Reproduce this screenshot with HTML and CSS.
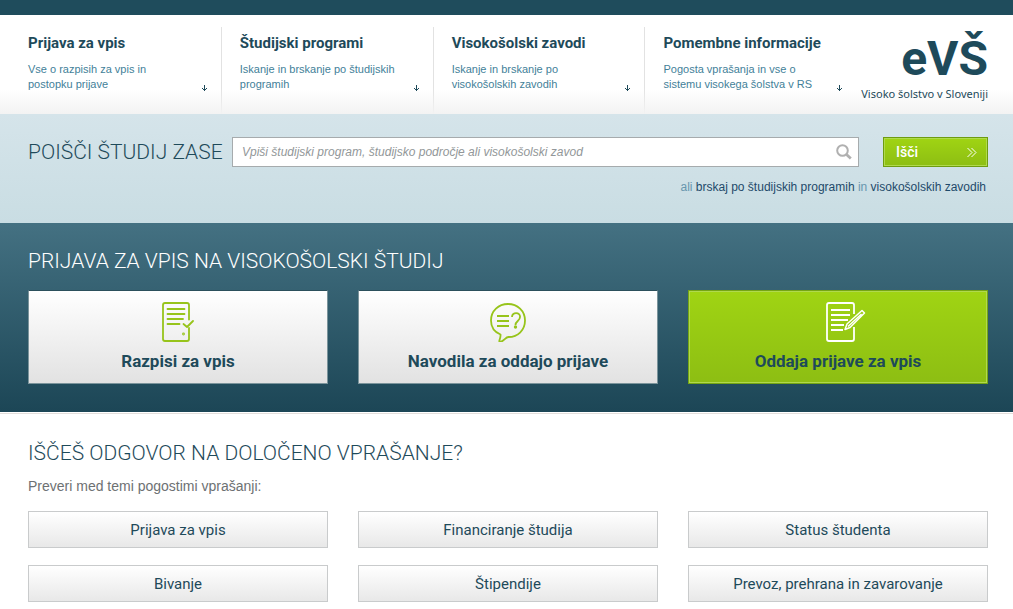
FILE: index.html
```html
<!DOCTYPE html>
<html lang="sl">
<head>
<meta charset="utf-8">
<meta name="viewport" content="width=device-width, initial-scale=1">
<title>eVŠ – Visoko šolstvo v Sloveniji</title>
<link rel="stylesheet" href="styles.css">
</head>
<body>
<div class="topbar"></div>
<header class="header wrap">
  <nav class="nav">
    <a class="nav-item" href="#">
      <span class="nav-title">Prijava za vpis</span>
      <span class="nav-text">Vse o razpisih za vpis in postopku prijave</span>
      <svg class="nav-arrow" width="5" height="7" viewBox="0 0 5 7" aria-hidden="true"><path d="M2 0h1v4h1v-1h1v1h-1v1h-1v1h-1v-1h-1v-1h-1v-1h1v1h1z"/></svg>
    </a>
    <a class="nav-item" href="#">
      <span class="nav-title">Študijski programi</span>
      <span class="nav-text">Iskanje in brskanje po študijskih programih</span>
      <svg class="nav-arrow" width="5" height="7" viewBox="0 0 5 7" aria-hidden="true"><path d="M2 0h1v4h1v-1h1v1h-1v1h-1v1h-1v-1h-1v-1h-1v-1h1v1h1z"/></svg>
    </a>
    <a class="nav-item" href="#">
      <span class="nav-title">Visokošolski zavodi</span>
      <span class="nav-text">Iskanje in brskanje po visokošolskih zavodih</span>
      <svg class="nav-arrow" width="5" height="7" viewBox="0 0 5 7" aria-hidden="true"><path d="M2 0h1v4h1v-1h1v1h-1v1h-1v1h-1v-1h-1v-1h-1v-1h1v1h1z"/></svg>
    </a>
    <a class="nav-item" href="#">
      <span class="nav-title">Pomembne informacije</span>
      <span class="nav-text">Pogosta vprašanja in vse o sistemu visokega šolstva v RS</span>
      <svg class="nav-arrow" width="5" height="7" viewBox="0 0 5 7" aria-hidden="true"><path d="M2 0h1v4h1v-1h1v1h-1v1h-1v1h-1v-1h-1v-1h-1v-1h1v1h1z"/></svg>
    </a>
  </nav>
  <a class="logo" href="#">
    <span class="logo-mark">eVŠ</span>
    <span class="logo-text">Visoko šolstvo v Sloveniji</span>
  </a>
</header>

<section class="search wrap">
  <form class="search-form">
    <label class="heading search-label" for="q">POIŠČI ŠTUDIJ ZASE</label>
    <div class="search-box">
      <input class="search-input" id="q" type="text" placeholder="Vpiši študijski program, študijsko področje ali visokošolski zavod">
      <svg width="16" height="16" viewBox="0 0 16 16" fill="none" stroke="#b0b0b0" aria-hidden="true"><circle cx="6.5" cy="6.5" r="5.3" stroke-width="2"/><path d="M10.5 10.5l4.3 4" stroke-width="2.8"/></svg>
    </div>
    <button class="search-button" type="submit">
      <span>Išči</span>
      <svg width="10" height="11" viewBox="0 0 10 11" fill="none" stroke="#fff" aria-hidden="true"><path d="M.5 1l4.500 4.500L.5 10M4.500 1L9 5.500 4.500 10"/></svg>
    </button>
  </form>
  <p class="search-links">ali <a href="#">brskaj po študijskih programih</a> in <a href="#">visokošolskih zavodih</a></p>
</section>

<section class="apply wrap">
  <h2 class="heading apply-title">PRIJAVA ZA VPIS NA VISOKOŠOLSKI ŠTUDIJ</h2>
  <div class="grid">
    <a class="card" href="#">
      <svg width="32" height="40" viewBox="0 0 32 40" fill="none" stroke="#97c41b" stroke-width="1.800" stroke-linecap="round" stroke-linejoin="round" aria-hidden="true"><path d="M27 17.500V3q0-2-2-2H3Q1 1 1 3v34q0 2 2 2h22q2 0 2-2V26"/><path d="M5.500 7h17M5.500 12h17M5.500 17h15.500M5.500 22h12M21.500 22l3.500 3 6-6"/><circle cx="21.500" cy="32" r=".5"/></svg>
      <span>Razpisi za vpis</span>
    </a>
    <a class="card" href="#">
      <svg width="36" height="40" viewBox="0 0 36 40" fill="none" stroke="#97c41b" stroke-width="1.800" stroke-linejoin="round" aria-hidden="true"><path d="M10.500 32.500C4.500 30 1 25 1 18.500 1 9 8.500 2 18 2s17 7 17 16.500S28 35 18.500 35c-3 0-4.500 4.500-8.500 5-2 0 1-4 .5-7.500z"/><path d="M7 14h12M7 19h12M7 24h12M22 15c0-5.500 8.500-5 8 0 0 4-4.500 4-4.500 8"/><circle cx="25.500" cy="25" r=".8"/></svg>
      <span>Navodila za oddajo prijave</span>
    </a>
    <a class="card card-green" href="#">
      <svg class="icon-pen" width="40" height="40" viewBox="0 0 40 40" fill="none" stroke="#fff" stroke-width="1.800" stroke-linejoin="round" aria-hidden="true"><path d="M28 12V3q0-2-2-2H3Q1 1 1 3v34q0 2 2 2h23q2 0 2-2V25"/><path d="M5 8h19M5 13h19M5 18h17M5 23h13M5 28h12"/><path d="M19 27.500l2-5.500L36 8.500l2.500 2.500L24 25.500z M22 24.500L35.500 12" stroke-width="1.500"/></svg>
      <span>Oddaja prijave za vpis</span>
    </a>
  </div>
</section>

<main class="faq wrap">
  <h2 class="heading">IŠČEŠ ODGOVOR NA DOLOČENO VPRAŠANJE?</h2>
  <p class="faq-lead">Preveri med temi pogostimi vprašanji:</p>
  <div class="grid faq-grid">
    <a class="topic" href="#">Prijava za vpis</a>
    <a class="topic" href="#">Financiranje študija</a>
    <a class="topic" href="#">Status študenta</a>
    <a class="topic" href="#">Bivanje</a>
    <a class="topic" href="#">Štipendije</a>
    <a class="topic" href="#">Prevoz, prehrana in zavarovanje</a>
  </div>
</main>
</body>
</html>
```

FILE: styles.css
```css
* { box-sizing: border-box; }

body {
  margin: 0;
  background: #fff;
  color: #1e4a5a;
  font-family: "Liberation Sans", Arial, sans-serif;
}

a { color: inherit; text-decoration: none; }
h2, p { margin: 0; }

.wrap { padding-left: 28px; padding-right: 25px; }

.heading {
  font-family: Roboto, sans-serif;
  font-size: 21px;
  font-weight: 300;
  line-height: 30px;
}

.topbar { height: 15px; background: #1f4c5c; }

/* Header */
.header {
  display: flex;
  gap: 4px;
  padding-top: 12px;
  background: linear-gradient(#fff 75%, #f3f3f3);
}

.nav {
  flex: 1;
  display: grid;
  grid-template-columns: repeat(4, 1fr);
  gap: 18px;
}

.nav-item {
  display: grid;
  grid-template-columns: 1fr auto;
  align-content: start;
  align-items: end;
  row-gap: 9px;
  height: 87px;
  padding: 6px 14px 0 0;
  border-right: 1px solid;
  border-image: linear-gradient(#e2e2e2 70%, #f3f3f3) 1;
}

.nav-item:last-child { border-right-color: transparent; border-image: none; }

.nav-title {
  grid-column: 1 / 3;
  font: bold 15px/20px Roboto, sans-serif;
  white-space: nowrap;
}

.nav-text {
  max-width: 156px;
  color: #437f99;
  font-size: 11px;
  line-height: 15px;
}

.nav-arrow { fill: #1e4a5a; }

.logo {
  display: flex;
  flex-direction: column;
  align-items: flex-end;
  padding-top: 4px;
  white-space: nowrap;
}

.logo-mark { font: bold 48px/56px Roboto, sans-serif; }
.logo-text { font: 11px/14px "Noto Sans", sans-serif; }

/* Search */
.search {
  padding-top: 23px;
  padding-bottom: 28px;
  background: linear-gradient(#d5e4ea, #c9dde3);
}

.search-form { display: flex; align-items: center; }
.search-label { flex: none; width: 204px; white-space: nowrap; }

.search-box {
  flex: 1;
  display: flex;
  align-items: center;
  height: 30px;
  margin-right: 24px;
  padding: 0 6px 0 9px;
  border: 1px solid #a6abad;
  background: #fff;
}

.search-input {
  flex: 1;
  min-width: 0;
  padding: 0;
  border: 0;
  outline: 0;
  background: none;
  font: italic 12px/18px "Liberation Sans", Arial, sans-serif;
}

.search-input::placeholder { color: #929799; opacity: 1; }

.search-button {
  display: flex;
  align-items: center;
  justify-content: space-between;
  width: 105px;
  height: 30px;
  padding: 0 10px 0 12px;
  border: 1px solid #6e9c10;
  background: linear-gradient(#a0d413, #8dbe13);
  box-shadow: inset 0 0 0 1px #b0da4c;
  color: #fff;
  font: 500 14px/18px Roboto, sans-serif;
}

.search-links {
  margin-top: 12px;
  padding-right: 2px;
  color: #6796ad;
  font-size: 12px;
  line-height: 16px;
  text-align: right;
}

.search-links a { color: #1e4a6a; }

/* Application cards */
.apply {
  padding-top: 23px;
  padding-bottom: 28px;
  background: linear-gradient(#447182, #1c4656);
}

.apply-title { margin-bottom: 14px; color: #fff; }

.grid {
  display: grid;
  grid-template-columns: repeat(3, 1fr);
  gap: 30px;
}

.card {
  display: flex;
  flex-direction: column;
  align-items: center;
  gap: 8px;
  height: 94px;
  padding-top: 11px;
  border: 1px solid #7b949b;
  border-top-color: #2c505c;
  background: linear-gradient(#fff, #e2e2e2);
  font: bold 17px/22px Roboto, sans-serif;
}

.card-green {
  border-color: #75a514;
  background: linear-gradient(#a0d413, #8dbe13);
  box-shadow: inset 0 0 0 1px #b0d94d;
}

.icon-pen { margin-left: 16px; }

/* Frequent questions */
.faq {
  margin-top: 1px;
  padding-top: 24px;
  padding-bottom: 7px;
  border-top: 1px solid #e3dedb;
}

.faq-lead {
  margin: 8px 0 15px;
  color: #6d7173;
  font-size: 14px;
  line-height: 20px;
}

.faq-grid { row-gap: 17px; }

.topic {
  padding: 8px 12px 7px;
  border: 1px solid #c9cbcc;
  background: linear-gradient(#fff, #e8e8e8);
  font: 15px/20px Roboto, sans-serif;
  text-align: center;
}
```
